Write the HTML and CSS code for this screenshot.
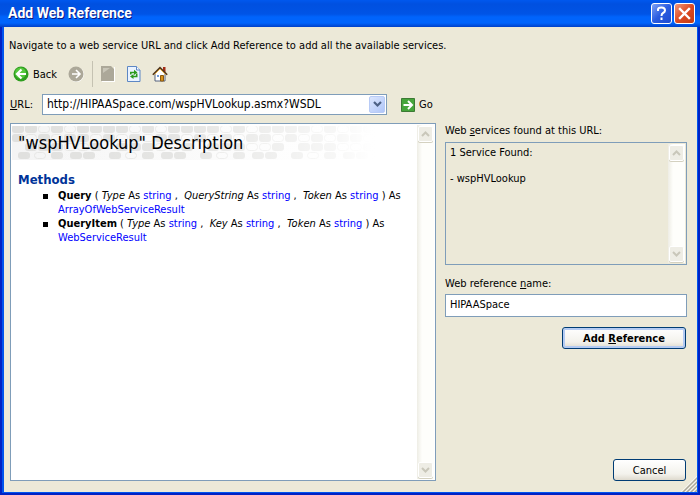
FILE: index.html
```
<!DOCTYPE html>
<html lang="en">
<head>
  <meta charset="UTF-8" />
  <meta name="viewport" content="width=device-width, initial-scale=1.0"/>
  <title>Add Web Reference</title>
  <link rel="stylesheet" href="styles.css">
</head>
<body>

  <div class="window">
    <header class="titlebar">
      <h1>Add Web Reference</h1>
      <button class="caption-btn help" aria-label="Help">
        <svg width="19" height="19" viewBox="0 0 19 19"><path d="M6 7V5.500Q6 3.500 9.500 3.500T13 6.500Q13 8 11 9Q9.500 9.800 9.500 12M9.500 13.500v2.500" fill="none" stroke="#fff" stroke-width="2"/></svg>
      </button>
      <button class="caption-btn close" aria-label="Close">
        <svg width="19" height="19" viewBox="0 0 19 19"><path d="M5 5l9 9M14 5l-9 9" fill="none" stroke="#fff" stroke-width="2.400" stroke-linecap="square"/></svg>
      </button>
    </header>

    <main class="content">
      <p class="intro">Navigate to a web service URL and click Add Reference to add all the available services.</p>

      <div class="toolbar">
        <button class="tool">
          <svg width="16" height="16" viewBox="0 0 16 16">
            <circle cx="8" cy="8" r="7.500" fill="#2f9e1f"/>
            <circle cx="7.500" cy="7" r="5.500" fill="#55c83c"/>
            <path d="M8.500 3.500L4 8l4.500 4.500M4.500 8H13" fill="none" stroke="#fff" stroke-width="2.200"/>
          </svg>
          <span>Back</span>
        </button>
        <button class="tool" aria-label="Forward" disabled>
          <svg width="16" height="16" viewBox="0 0 16 16">
            <circle cx="8.500" cy="8.500" r="7.500" fill="#fff"/>
            <circle cx="8" cy="8" r="7.500" fill="#aca899"/>
            <path d="M8 4l4 4-4 4M4 8h7.500" fill="none" stroke="#fff" stroke-width="1.600"/>
          </svg>
        </button>
        <span class="divider"></span>
        <button class="tool" aria-label="Stop" disabled>
          <svg width="15" height="16" viewBox="0 0 15 16">
            <path d="M1 1h13v15H1z" fill="#fff"/>
            <path d="M0 0h13v15H0z" fill="#aca899"/>
            <path d="M2 7V2h7z" fill="#c9c6b8"/>
            <path d="M10 0h3v3z" fill="#ece9d8"/>
          </svg>
        </button>
        <button class="tool" aria-label="Refresh">
          <svg width="14" height="16" viewBox="0 0 14 16">
            <path d="M.5 .5h9l3.500 3.500v11.500H.5z" fill="#eaf3ff" stroke="#5d87c4"/>
            <path d="M9.500 .5v3.500H13" fill="#fff" stroke="#5d87c4"/>
            <path d="M3.800 8.500V6.500h4M9.700 7.500v3H6" fill="none" stroke="#2c9a1c" stroke-width="1.600"/>
            <path d="M7 3.700l3.500 2.800L7 9zM6.500 8v5L3 10.500z" fill="#2c9a1c"/>
          </svg>
        </button>
        <button class="tool" aria-label="Home">
          <svg width="16" height="16" viewBox="0 0 16 16">
            <path d="M11 1h2.500v5H11z" fill="#a22c17"/>
            <path d="M3 8l5-5 5 5v7H3z" fill="#fff" stroke="#54637c"/>
            <path d="M8.500 9.500h3V15h-3z" fill="#d9921a" stroke="#8a5a10"/>
            <path d="M5 9h2v2H5z" fill="#6f9bd8"/>
            <path d="M.8 8.800L8 1.600l7.200 7.200" fill="none" stroke="#52371c" stroke-width="1.600"/>
            <path d="M2.500 8.500L8 3l5.500 5.500" fill="none" stroke="#e8b34b"/>
          </svg>
        </button>
      </div>

      <form class="url-row">
        <label for="url"><u>U</u>RL:</label>
        <div class="combo">
          <input id="url" type="text" value="http://HIPAASpace.com/wspHVLookup.asmx?WSDL">
          <button type="button" aria-label="Show addresses">
            <svg width="9" height="7" viewBox="0 0 9 7"><path d="M1 1l3.500 3.500L8 1" fill="none" stroke="#4d6185" stroke-width="2.200"/></svg>
          </button>
        </div>
        <button class="go" type="button">
          <svg width="14" height="14" viewBox="0 0 14 14">
            <path d="M.5 .5h13v13H.5z" fill="#45a53b" stroke="#3c7a35"/>
            <path d="M7 3l4 4-4 4M2.500 7H10" fill="none" stroke="#fff" stroke-width="2"/>
          </svg>
          <span>Go</span>
        </button>
      </form>

      <div class="panes">
        <section class="description">
          <div class="page">
            <div class="banner">
              <svg class="tiles" width="360" height="34" viewBox="0 0 360 34" aria-hidden="true">
                <defs>
                  <pattern id="tile" width="91" height="36" patternUnits="userSpaceOnUse">
                    <g fill="#e0e0de">
                      <rect x="0" y="-1" width="12" height="8" rx="3"/>
                      <rect x="13" y="-1" width="12" height="8" rx="3"/>
                      <rect x="39" y="-1" width="12" height="8" rx="3"/>
                      <rect x="65" y="-1" width="12" height="8" rx="3"/>
                      <rect x="78" y="-1" width="12" height="8" rx="3"/>
                      <rect x="0" y="8" width="12" height="8" rx="3"/>
                      <rect x="26" y="8" width="12" height="8" rx="3"/>
                      <rect x="52" y="8" width="12" height="8" rx="3"/>
                      <rect x="65" y="8" width="12" height="8" rx="3"/>
                      <rect x="13" y="17" width="12" height="8" rx="3"/>
                      <rect x="26" y="17" width="12" height="8" rx="3"/>
                      <rect x="39" y="17" width="12" height="8" rx="3"/>
                      <rect x="78" y="17" width="12" height="8" rx="3"/>
                      <rect x="6" y="26" width="12" height="7" rx="3"/>
                      <rect x="39" y="26" width="12" height="7" rx="3"/>
                      <rect x="58" y="26" width="12" height="7" rx="3"/>
                      <rect x="71" y="26" width="12" height="7" rx="3"/>
                    </g>
                    <g fill="none" stroke="#e6e6e4">
                      <rect x="26.500" y="-.5" width="11" height="7" rx="3"/>
                      <rect x="52.500" y="-.5" width="11" height="7" rx="3"/>
                      <rect x="13.500" y="8.500" width="11" height="7" rx="3"/>
                      <rect x="39.500" y="8.500" width="11" height="7" rx="3"/>
                      <rect x="78.500" y="8.500" width="11" height="7" rx="3"/>
                      <rect x="52.500" y="17.500" width="11" height="7" rx="3"/>
                      <rect x="65.500" y="17.500" width="11" height="7" rx="3"/>
                      <rect x="22.500" y="26.500" width="11" height="6" rx="3"/>
                    </g>
                  </pattern>
                  <linearGradient id="fade">
                    <stop offset="0" stop-color="#fff" stop-opacity="0"/>
                    <stop offset="0.5" stop-color="#fff" stop-opacity="0.2"/>
                    <stop offset="0.9" stop-color="#fff" stop-opacity="0.75"/>
                    <stop offset="1" stop-color="#fff" stop-opacity="1"/>
                  </linearGradient>
                </defs>
                <rect width="360" height="34" fill="url(#tile)"/>
                <rect width="360" height="34" fill="url(#fade)"/>
              </svg>
              <h2>"wspHVLookup" Description</h2>
            </div>
            <h3>Methods</h3>
            <ul>
              <li><b>Query</b> ( <i>Type</i> As <a href="#">string</a> ,&nbsp; <i>QueryString</i> As <a href="#">string</a> ,&nbsp; <i>Token</i> As <a href="#">string</a> ) As <a href="#">ArrayOfWebServiceResult</a></li>
              <li><b>QueryItem</b> ( <i>Type</i> As <a href="#">string</a> ,&nbsp; <i>Key</i> As <a href="#">string</a> ,&nbsp; <i>Token</i> As <a href="#">string</a> ) As <a href="#">WebServiceResult</a></li>
            </ul>
          </div>
          <div class="scrollbar">
            <button aria-label="Scroll up" disabled><svg width="9" height="6" viewBox="0 0 9 6"><path d="M1 5l3.500-3.500L8 5" fill="none" stroke="#c9c7ba" stroke-width="2"/></svg></button>
            <button aria-label="Scroll down" disabled><svg width="9" height="6" viewBox="0 0 9 6"><path d="M1 1l3.500 3.500L8 1" fill="none" stroke="#c9c7ba" stroke-width="2"/></svg></button>
          </div>
        </section>

        <section class="side">
          <label for="services">Web <u>s</u>ervices found at this URL:</label>
          <div class="services">
            <textarea id="services" readonly>1 Service Found:

- wspHVLookup</textarea>
            <div class="scrollbar">
              <button aria-label="Scroll up" disabled><svg width="9" height="6" viewBox="0 0 9 6"><path d="M1 5l3.500-3.500L8 5" fill="none" stroke="#c9c7ba" stroke-width="2"/></svg></button>
              <button aria-label="Scroll down" disabled><svg width="9" height="6" viewBox="0 0 9 6"><path d="M1 1l3.500 3.500L8 1" fill="none" stroke="#c9c7ba" stroke-width="2"/></svg></button>
            </div>
          </div>
          <label for="refname">Web reference <u>n</u>ame:</label>
          <input id="refname" class="refname" type="text" value="HIPAASpace">
          <button class="btn primary">Add <u>R</u>eference</button>
          <button class="btn cancel">Cancel</button>
        </section>
      </div>
    </main>

    <svg class="grip" width="16" height="16" viewBox="0 0 16 16" aria-hidden="true">
      <path d="M0 17L17 0M4 17L17 4M8 17l9-9M12 17l5-5" stroke="#fff" stroke-width="1.500"/>
      <path d="M1 17L17 1M5 17L17 5M9 17l8-8M13 17l4-4" stroke="#aca899" stroke-width="1.500"/>
    </svg>
  </div>

</body>
</html>
```
FILE: styles.css
```
:root {
  --face: #ece9d8;
  --field-border: #7f9db9;
  --frame: #0022c4;
  --frame-light: #0054ee;
  --link: #0000ff;
}

* {
  box-sizing: border-box;
}

body {
  margin: 0;
  font-family: 'Tahoma', 'DejaVu Sans Condensed', 'DejaVu Sans', sans-serif;
  font-size: 11px;
  line-height: 13px;
  color: #000;
}

h1, h2, h3, p, ul {
  margin: 0;
  padding: 0;
}

button, input, textarea {
  font: inherit;
  color: inherit;
  padding: 0;
  margin: 0;
}

.window {
  position: relative;
  display: flex;
  flex-direction: column;
  min-height: 100vh;
  background: var(--face);
  border: solid var(--frame);
  border-width: 0 2px 2px 2px;
}

/* Title bar */
.titlebar {
  display: flex;
  align-items: center;
  gap: 2px;
  height: 27px;
  margin: 0 -2px;
  padding: 0 5px 0 8px;
  background: linear-gradient(#0058ee 0, #0050e0 4px, #0054e6 14px, #0064fc 17px, #0064fc 23px, #0040c8 27px);
}

.titlebar h1 {
  flex: 1;
  font-family: 'Trebuchet MS', Roboto, sans-serif;
  font-size: 14px;
  font-weight: bold;
  color: #fff;
  text-shadow: 1px 1px #0a1883;
}

.caption-btn {
  display: flex;
  align-items: center;
  justify-content: center;
  width: 21px;
  height: 21px;
  border: 1px solid #fff;
  border-radius: 3px;
}

.help {
  background: linear-gradient(135deg, #7fa2f5, #2a5ce0 50%, #1e4bd0);
}

.close {
  background: linear-gradient(135deg, #f0987c, #dc4a22 50%, #c23a12);
}

/* Content */
.content {
  flex: 1;
  display: flex;
  flex-direction: column;
  padding: 12px 10px 11px 6px;
  border: solid var(--frame-light);
  border-width: 0 1px 1px 2px;
}

.intro {
  margin-left: -1px;
}

.toolbar {
  display: flex;
  align-items: center;
  height: 26px;
  margin-top: 9px;
  padding-left: 3px;
  gap: 11px;
}

.tool, .go {
  display: flex;
  align-items: center;
  gap: 4px;
  border: none;
  background: transparent;
}

.divider {
  width: 1px;
  height: 26px;
  margin: 0 -3px;
  background: #c5c2b2;
}

.url-row {
  display: flex;
  align-items: center;
  margin-top: 7px;
}

.url-row label {
  width: 32px;
}

.combo {
  display: flex;
  flex: 1;
  max-width: 345px;
  height: 21px;
  padding: 1px;
  background: #fff;
  border: 1px solid var(--field-border);
}

.combo input {
  flex: 1;
  min-width: 0;
  padding-left: 3px;
  font-size: 12px;
  border: none;
  outline: none;
}

.combo button {
  display: flex;
  align-items: center;
  justify-content: center;
  width: 16px;
  background: linear-gradient(135deg, #dbe6fe, #b0c6f8);
  border: 1px solid #b8cbf6;
  border-radius: 2px;
}

.go {
  margin-left: 14px;
}

/* Panes */
.panes {
  flex: 1;
  display: flex;
  gap: 9px;
  margin-top: 8px;
}

.description {
  flex: 1;
  display: flex;
  padding: 1px;
  background: #fff;
  border: 1px solid var(--field-border);
}

.page {
  flex: 1;
  min-width: 0;
}

.banner {
  position: relative;
  height: 34px;
  margin-top: 1px;
  padding: 6px;
  background: linear-gradient(90deg, #f4f4f4, #fff 90%);
  overflow: hidden;
}

.tiles {
  position: absolute;
  top: 0;
  left: 0;
}

.banner h2 {
  position: relative;
  font-size: 18px;
  line-height: 22px;
  font-weight: normal;
}

.page h3 {
  margin: 12px 6px 1px;
  font-size: 13px;
  line-height: 16px;
  color: #003399;
}

.page ul {
  padding-left: 46px;
  list-style: none;
}

.page li {
  position: relative;
  margin-right: 14px;
  line-height: 14px;
}

.page li::before {
  content: '';
  position: absolute;
  left: -15px;
  top: 5px;
  width: 5px;
  height: 5px;
  background: #000;
}

.page a {
  color: var(--link);
  text-decoration: none;
}

.scrollbar {
  display: flex;
  flex-direction: column;
  justify-content: space-between;
  width: 17px;
  padding: 1px;
  background: linear-gradient(90deg, #eeede5, #fefefb 30%);
}

.scrollbar button {
  display: flex;
  align-items: center;
  justify-content: center;
  height: 16px;
  background: #eeede5;
  border: 1px solid #fff;
  border-radius: 2px;
  box-shadow: 0 1px #d4d1c0;
}

.side {
  display: flex;
  flex-direction: column;
  width: 242px;
}

.side label {
  margin-top: 1px;
}

.services {
  display: flex;
  height: 123px;
  margin: 5px 0 11px;
  padding: 1px;
  border: 1px solid var(--field-border);
}

.services textarea {
  flex: 1;
  min-width: 0;
  padding: 2px 3px;
  background: transparent;
  border: none;
  outline: none;
  resize: none;
}

.refname {
  height: 23px;
  margin-top: 4px;
  padding: 0 4px 2px;
  background: #fff;
  border: 1px solid var(--field-border);
  outline: none;
}

.btn {
  align-self: flex-end;
  height: 22px;
  margin-right: 1px;
  background: linear-gradient(#fff, #f3f2ec 70%, #dedace);
  border: 1px solid #003c74;
  border-radius: 3px;
}

.primary {
  width: 124px;
  margin-top: 10px;
  font-weight: bold;
  box-shadow: inset 0 0 0 2px #b4cbf3;
}

.cancel {
  width: 73px;
  margin-top: auto;
}

.grip {
  position: absolute;
  right: 1px;
  bottom: 1px;
}
```
